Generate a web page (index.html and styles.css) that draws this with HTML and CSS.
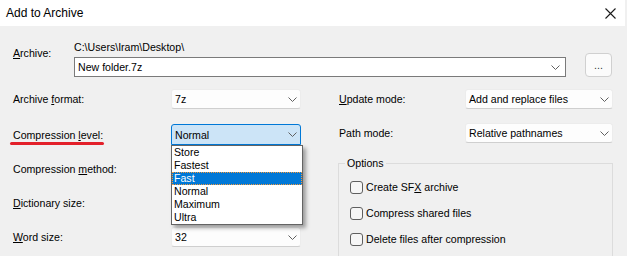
FILE: index.html
```html
<!DOCTYPE html>
<html lang="en">
<head>
    <meta charset="UTF-8">
    <meta name="viewport" content="width=device-width, initial-scale=1.0">
    <title>Add to Archive</title>
    <link rel="stylesheet" href="styles.css">
</head>
<body>
    <div class="window">
        <div class="titlebar">
            <span class="title">Add to Archive</span>
            <span class="close">
                <svg width="11" height="11" viewBox="0 0 11 11"><path d="M0.5 0.5 L10.5 10.5 M10.5 0.5 L0.5 10.5" stroke="#1a1a1a" stroke-width="1.1" fill="none"/></svg>
            </span>
        </div>

        <div class="dialog">
            <div class="archive-row">
                <div class="archive-label"><u>A</u>rchive:</div>
                <div class="archive-field">
                    <div class="path">C:\Users\Iram\Desktop\</div>
                    <div class="archive-input">
                        <div class="combo edit">
                            <span>New folder.7z</span>
                            <svg class="chev" width="9" height="5" viewBox="0 0 9 5"><path d="M0.5 0.5 L4.5 4.5 L8.5 0.5" stroke="#606060" fill="none"/></svg>
                        </div>
                        <div class="browse">...</div>
                    </div>
                </div>
            </div>

            <div class="settings">
                <div class="col left">
                    <div class="row first">
                        <div class="lbl">Archive <u>f</u>ormat:</div>
                        <div class="combo">
                            <span>7z</span>
                            <svg class="chev" width="9" height="5" viewBox="0 0 9 5"><path d="M0.5 0.5 L4.5 4.5 L8.5 0.5" stroke="#606060" fill="none"/></svg>
                        </div>
                    </div>
                    <div class="row">
                        <div class="lbl"><span class="marked">Compression <u>l</u>evel:</span></div>
                        <div class="combo focused">
                            <span>Normal</span>
                            <svg class="chev" width="9" height="5" viewBox="0 0 9 5"><path d="M0.5 0.5 L4.5 4.5 L8.5 0.5" stroke="#606060" fill="none"/></svg>
                            <ul class="droplist">
                                <li>Store</li>
                                <li>Fastest</li>
                                <li class="selected">Fast</li>
                                <li>Normal</li>
                                <li>Maximum</li>
                                <li>Ultra</li>
                            </ul>
                        </div>
                    </div>
                    <div class="row">
                        <div class="lbl">Compression <u>m</u>ethod:</div>
                        <div class="combo"></div>
                    </div>
                    <div class="row">
                        <div class="lbl"><u>D</u>ictionary size:</div>
                        <div class="combo"></div>
                    </div>
                    <div class="row">
                        <div class="lbl"><u>W</u>ord size:</div>
                        <div class="combo">
                            <span>32</span>
                            <svg class="chev" width="9" height="5" viewBox="0 0 9 5"><path d="M0.5 0.5 L4.5 4.5 L8.5 0.5" stroke="#606060" fill="none"/></svg>
                        </div>
                    </div>
                </div>

                <div class="col right">
                    <div class="row">
                        <div class="lbl"><u>U</u>pdate mode:</div>
                        <div class="combo">
                            <span>Add and replace files</span>
                            <svg class="chev" width="9" height="5" viewBox="0 0 9 5"><path d="M0.5 0.5 L4.5 4.5 L8.5 0.5" stroke="#606060" fill="none"/></svg>
                        </div>
                    </div>
                    <div class="row">
                        <div class="lbl">Path mode:</div>
                        <div class="combo">
                            <span>Relative pathnames</span>
                            <svg class="chev" width="9" height="5" viewBox="0 0 9 5"><path d="M0.5 0.5 L4.5 4.5 L8.5 0.5" stroke="#606060" fill="none"/></svg>
                        </div>
                    </div>
                    <fieldset class="options">
                        <legend>Options</legend>
                        <div class="check"><span class="box"></span><span>Create SF<u>X</u> archive</span></div>
                        <div class="check"><span class="box"></span><span>Compress shared files</span></div>
                        <div class="check"><span class="box"></span><span>Delete files after compression</span></div>
                    </fieldset>
                </div>
            </div>
        </div>
    </div>
</body>
</html>
```

FILE: styles.css
```css
* {
    box-sizing: border-box;
}
body {
    margin: 0;
    font-family: "Liberation Sans", Arial, sans-serif;
    font-size: 10.6px;
    color: #000;
}
u {
    text-underline-offset: 1px;
}
.window {
    width: 627px;
    height: 256px;
    background-color: #f0f0f0;
    overflow: hidden;
}
.titlebar {
    height: 26px;
    margin-right: 2px;
    background-color: #ffffff;
    display: flex;
    align-items: center;
    justify-content: space-between;
    padding: 0 9px 0 6px;
    font-size: 12px;
}
.close svg {
    display: block;
}
.dialog {
    padding: 14px 14px 0 13px;
}

/* archive name */
.archive-row {
    display: flex;
}
.archive-label {
    width: 61px;
    padding-top: 6px;
    line-height: 14px;
}
.archive-field {
    flex: 1;
}
.path {
    line-height: 14px;
    margin-bottom: 3px;
}
.archive-input {
    display: flex;
    align-items: flex-end;
}
.browse {
    width: 27px;
    height: 24px;
    margin: -4px 0 0 19px;
    border: 1px solid #d0d0d0;
    border-radius: 4px;
    background-color: #fbfbfb;
    text-align: center;
    line-height: 22px;
    color: #333;
}

/* combo boxes */
.combo {
    position: relative;
    height: 20px;
    display: flex;
    align-items: center;
    justify-content: space-between;
    padding: 0 3px 0 3px;
    background-color: #fdfdfd;
    border: 1px solid #ececec;
    border-bottom-color: #cfcfcf;
    border-radius: 3px;
}
.combo .chev {
    display: block;
}
.combo.edit {
    width: 492px;
    background-color: #ffffff;
    border: 1px solid #7a7a7a;
    border-radius: 0;
    padding-right: 5px;
}
.combo.focused {
    height: 21px;
    background-color: #cce4f7;
    border: 1px solid #0078d7;
    border-radius: 3px 3px 0 0;
}

/* layout of the two columns */
.settings {
    display: flex;
    margin-top: 12px;
}
.col {
    display: flex;
    flex-direction: column;
    gap: 14px;
}
.row {
    display: flex;
    align-items: center;
}
.row.first {
    margin-bottom: 1px;
}
.left .lbl {
    width: 158px;
}
.left .combo {
    width: 130px;
}
.right {
    margin-left: 38px;
    width: 274px;
}
.right .lbl {
    width: 126px;
}
.right .combo {
    width: 148px;
}
.marked {
    position: relative;
}
.marked::after {
    content: "";
    position: absolute;
    left: -3px;
    right: -1px;
    bottom: -4px;
    height: 3px;
    border-radius: 2px;
    background-color: #e3202a;
}

/* expanded list */
.droplist {
    position: absolute;
    top: 20px;
    left: -1px;
    width: 132px;
    margin: 0;
    padding: 0;
    list-style: none;
    background-color: #ffffff;
    border: 1px solid #646464;
    box-shadow: 3px 3px 4px rgba(0, 0, 0, 0.35);
    z-index: 2;
}
.droplist li {
    height: 13px;
    line-height: 13px;
    padding-left: 2px;
}
.droplist li.selected {
    background-color: #0078d7;
    color: #ffffff;
    outline: 1px dotted #f39a3c;
    outline-offset: -1px;
}

/* options group */
.options {
    margin: -1px 0 0 -1px;
    width: 275px;
    height: 120px;
    border: 1px solid #dcdcdc;
    padding: 9px 0 0 6px;
}
.options legend {
    padding: 0 2px;
    line-height: 14px;
}
.check {
    display: flex;
    align-items: center;
    height: 16px;
    margin: 0 0 10px 5px;
}
.box {
    width: 13px;
    height: 13px;
    border: 1px solid #5f5f5f;
    border-radius: 3px;
    background-color: #f6f6f6;
    margin-right: 3px;
}
```
